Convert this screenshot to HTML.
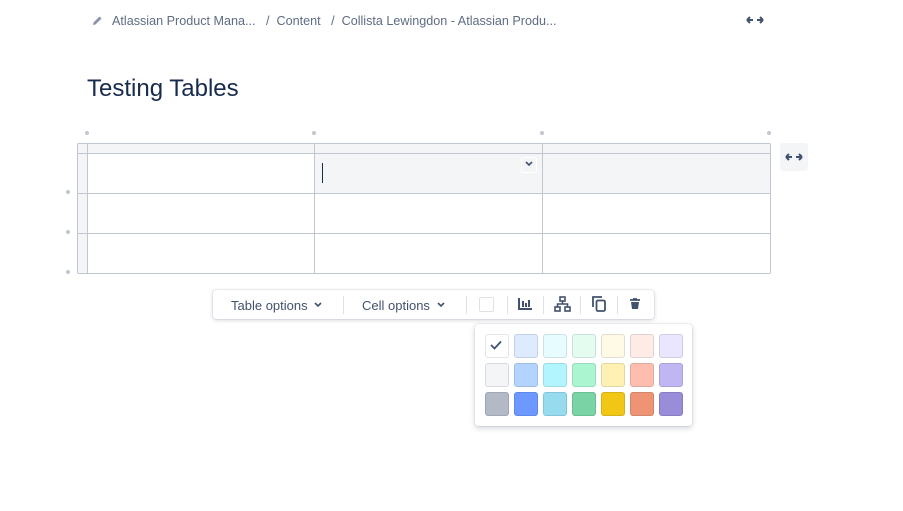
<!DOCTYPE html>
<html><head><meta charset="utf-8"><style>
body{margin:0;width:903px;height:511px;background:#fff;font-family:"Liberation Sans",sans-serif;position:relative;overflow:hidden;color:#172b4d}
.a{position:absolute}
.crumb{top:14px;left:112px;font-size:12.6px;color:#5e6c84;white-space:nowrap}
.v{position:absolute;background:#c1c7d0;width:1px}
.h{position:absolute;background:#c1c7d0;height:1px}
.dot{position:absolute;width:4px;height:4px;border-radius:2px;background:#c1c7d0}
.sw{position:absolute;width:22px;height:22px;border-radius:3px;border:1px solid rgba(9,30,66,0.12)}
.sep{position:absolute;top:296px;width:1px;height:18px;background:#dfe1e6}
</style></head><body>
<svg class="a" style="left:92px;top:15px" width="11" height="11" viewBox="0 0 11 11"><path d="M1 10 L1.5 7.5 L7.5 1.5 L9.5 3.5 L3.5 9.5 Z" fill="#8993a4"/></svg>
<div class="a crumb">Atlassian Product Mana...&nbsp;&nbsp;&nbsp;/&nbsp;&nbsp;Content&nbsp;&nbsp;&nbsp;/&nbsp;&nbsp;Collista Lewingdon - Atlassian Produ...</div>
<svg class="a" style="left:746px;top:15px" width="18" height="10" viewBox="0 0 18 10"><path d="M1 5h6M1 5l3-3M1 5l3 3M17 5h-6M17 5l-3-3M17 5l-3 3" stroke="#42526e" stroke-width="2" fill="none"/></svg>
<div class="a" style="left:87px;top:75px;font-size:24px;color:#172b4d">Testing Tables</div>

<div class="dot" style="left:85px;top:131px"></div><div class="dot" style="left:312px;top:131px"></div><div class="dot" style="left:540px;top:131px"></div><div class="dot" style="left:767px;top:131px"></div>
<div class="dot" style="left:66px;top:190px"></div><div class="dot" style="left:66px;top:230px"></div><div class="dot" style="left:66px;top:270px"></div>

<div class="a" style="left:77px;top:143px;width:693px;height:10px;background:#f4f5f7"></div>
<div class="a" style="left:77px;top:143px;width:10px;height:130px;background:#f4f5f7"></div>
<div class="a" style="left:314px;top:153px;width:456px;height:40px;background:#f4f5f7"></div>
<div class="a" style="left:77px;top:143px;width:692px;height:129px;border:1px solid #c1c7d0;border-radius:2px"></div>
<div class="v" style="left:87px;top:143px;height:130px"></div>
<div class="v" style="left:314px;top:143px;height:130px"></div>
<div class="v" style="left:542px;top:143px;height:130px"></div>
<div class="h" style="left:77px;top:153px;width:693px"></div>
<div class="h" style="left:77px;top:193px;width:693px"></div>
<div class="h" style="left:77px;top:233px;width:693px"></div>
<div class="a" style="left:322px;top:163px;width:1px;height:20px;background:#172b4d"></div>
<div class="a" style="left:521px;top:157px;width:14px;height:14px;border:1px solid #fff;border-radius:2px;background:#f4f5f7"></div>
<svg class="a" style="left:525px;top:161px" width="8" height="6" viewBox="0 0 8 6"><path d="M1 1l3 3 3-3" stroke="#42526e" stroke-width="1.6" fill="none"/></svg>
<div class="a" style="left:780px;top:143px;width:28px;height:28px;background:#f4f5f7;border-radius:3px"></div>
<svg class="a" style="left:785px;top:152px" width="18" height="10" viewBox="0 0 18 10"><path d="M1 5h6M1 5l3-3M1 5l3 3M17 5h-6M17 5l-3-3M17 5l-3 3" stroke="#42526e" stroke-width="2" fill="none"/></svg>

<div class="a" style="left:213px;top:290px;width:441px;height:29px;background:#fff;border-radius:3px;box-shadow:0 1px 4px rgba(9,30,66,.2),0 0 1px rgba(9,30,66,.3)"></div>
<div class="a" style="left:231px;top:298px;font-size:13px;color:#42526e">Table options</div>
<svg class="a" style="left:314px;top:302px" width="8" height="6" viewBox="0 0 8 6"><path d="M1 1l3 3 3-3" stroke="#42526e" stroke-width="1.6" fill="none"/></svg>
<div class="sep" style="left:343px"></div>
<div class="a" style="left:362px;top:298px;font-size:13px;color:#42526e">Cell options</div>
<svg class="a" style="left:437px;top:302px" width="8" height="6" viewBox="0 0 8 6"><path d="M1 1l3 3 3-3" stroke="#42526e" stroke-width="1.6" fill="none"/></svg>
<div class="sep" style="left:466px"></div>
<div class="a" style="left:479px;top:297px;width:13px;height:13px;border:1px solid #dfe1e6;border-radius:2px"></div>
<div class="sep" style="left:507px"></div>
<svg class="a" style="left:518px;top:297px" width="15" height="13" viewBox="0 0 15 13"><path d="M1 1v11h13" stroke="#42526e" stroke-width="2" fill="none"/><path d="M5 4v6M8 6v4M11 3v7" stroke="#42526e" stroke-width="2"/></svg>
<div class="sep" style="left:543px"></div>
<svg class="a" style="left:554px;top:296px" width="17" height="16" viewBox="0 0 17 16"><rect x="6" y="1" width="5" height="4" fill="none" stroke="#42526e" stroke-width="1.6"/><rect x="1" y="11" width="5" height="4" fill="none" stroke="#42526e" stroke-width="1.6"/><rect x="11" y="11" width="5" height="4" fill="none" stroke="#42526e" stroke-width="1.6"/><path d="M8.5 5v3M3.5 11V8h10v3" stroke="#42526e" stroke-width="1.6" fill="none"/></svg>
<div class="sep" style="left:580px"></div>
<svg class="a" style="left:592px;top:296px" width="15" height="16" viewBox="0 0 15 16"><path d="M1 11V1h9" stroke="#42526e" stroke-width="1.8" fill="none"/><rect x="4.5" y="4.5" width="8.5" height="10.5" rx="1.5" fill="none" stroke="#42526e" stroke-width="1.8"/></svg>
<div class="sep" style="left:617px"></div>
<svg class="a" style="left:629px;top:298px" width="12" height="12" viewBox="0 0 12 12"><path d="M1 2h10M4 1h4" stroke="#42526e" stroke-width="1.8"/><path d="M2 4h8l-1 7H3z" fill="#42526e"/></svg>

<div class="a" style="left:475px;top:324px;width:217px;height:102px;background:#fff;border-radius:3px;box-shadow:0 2px 6px rgba(9,30,66,.2),0 0 1px rgba(9,30,66,.3)"></div>
<div class="sw" style="left:485px;top:334px;background:#fff"></div>
<svg class="a" style="left:490px;top:340px" width="12" height="10" viewBox="0 0 12 10"><path d="M1 5l3.5 3.5L11 1.5" stroke="#42526e" stroke-width="1.8" fill="none"/></svg>
<div class="sw" style="left:514px;top:334px;background:#deebff"></div>
<div class="sw" style="left:543px;top:334px;background:#e6fcff"></div>
<div class="sw" style="left:572px;top:334px;background:#e3fcef"></div>
<div class="sw" style="left:601px;top:334px;background:#fffae6"></div>
<div class="sw" style="left:630px;top:334px;background:#ffebe6"></div>
<div class="sw" style="left:659px;top:334px;background:#eae6ff"></div>
<div class="sw" style="left:485px;top:363px;background:#f4f5f7"></div>
<div class="sw" style="left:514px;top:363px;background:#b3d4ff"></div>
<div class="sw" style="left:543px;top:363px;background:#b3f5ff"></div>
<div class="sw" style="left:572px;top:363px;background:#abf5d1"></div>
<div class="sw" style="left:601px;top:363px;background:#fff0b3"></div>
<div class="sw" style="left:630px;top:363px;background:#ffbdad"></div>
<div class="sw" style="left:659px;top:363px;background:#c0b6f2"></div>
<div class="sw" style="left:485px;top:392px;background:#b3bac5"></div>
<div class="sw" style="left:514px;top:392px;background:#6c98ff"></div>
<div class="sw" style="left:543px;top:392px;background:#97dcee"></div>
<div class="sw" style="left:572px;top:392px;background:#79d3a4"></div>
<div class="sw" style="left:601px;top:392px;background:#f1c615"></div>
<div class="sw" style="left:630px;top:392px;background:#ee9373"></div>
<div class="sw" style="left:659px;top:392px;background:#998dd9"></div>
</body></html>
